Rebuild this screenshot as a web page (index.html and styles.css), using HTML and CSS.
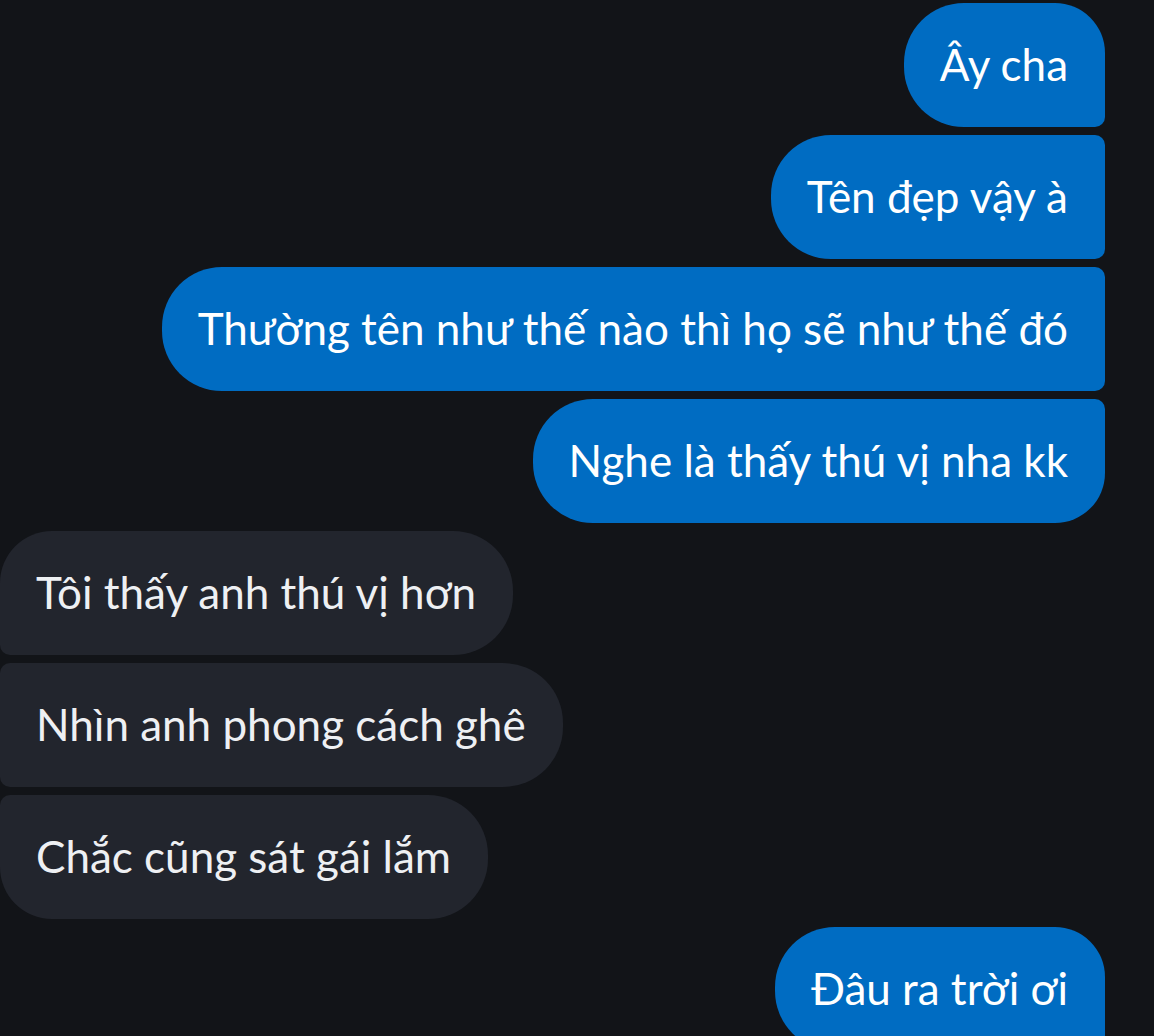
FILE: index.html
```html
<!DOCTYPE html>
<html lang="vi">
<head>
<meta charset="utf-8">
<link rel="stylesheet" href="styles.css">
</head>
<body>
<div class="chat">
  <div class="row out"><div class="bubble sent first">Ây cha</div></div>
  <div class="row out"><div class="bubble sent mid">Tên đẹp vậy à</div></div>
  <div class="row out"><div class="bubble sent mid">Thường tên như thế nào thì họ sẽ như thế đó</div></div>
  <div class="row out"><div class="bubble sent last">Nghe là thấy thú vị nha kk</div></div>
  <div class="row in"><div class="bubble recv first">Tôi thấy anh thú vị hơn</div></div>
  <div class="row in"><div class="bubble recv mid">Nhìn anh phong cách ghê</div></div>
  <div class="row in"><div class="bubble recv last">Chắc cũng sát gái lắm</div></div>
  <div class="row out gap"><div class="bubble sent first">Đâu ra trời ơi</div></div>
</div>
</body>
</html>
```

FILE: styles.css
```css
html, body {
  margin: 0;
  padding: 0;
  background: #121418;
}
body {
  width: 1154px;
  height: 1036px;
  overflow: hidden;
  font-family: "Lato", "Noto Sans", sans-serif;
}
.chat {
  display: flex;
  flex-direction: column;
  gap: 8px;
  padding-top: 3px;
}
.row {
  display: flex;
}
.row.out {
  justify-content: flex-end;
  padding-right: 49px;
}
.row.in {
  justify-content: flex-start;
}
.bubble {
  height: 124px;
  box-sizing: border-box;
  display: flex;
  align-items: center;
  padding: 0 37px 2px 36px;
  font-size: 44px;
  white-space: nowrap;
  letter-spacing: 0;
}
.sent {
  background: #006cc2;
  color: #ffffff;
  border-radius: 60px 10px 10px 60px;
}
.sent.first { border-top-right-radius: 50px; }
.sent.last { border-bottom-right-radius: 50px; }
.recv {
  background: #22252d;
  color: #eef0f3;
  border-radius: 10px 60px 60px 10px;
}
.recv.first { border-top-left-radius: 52px; }
.recv.last { border-bottom-left-radius: 52px; }
```
